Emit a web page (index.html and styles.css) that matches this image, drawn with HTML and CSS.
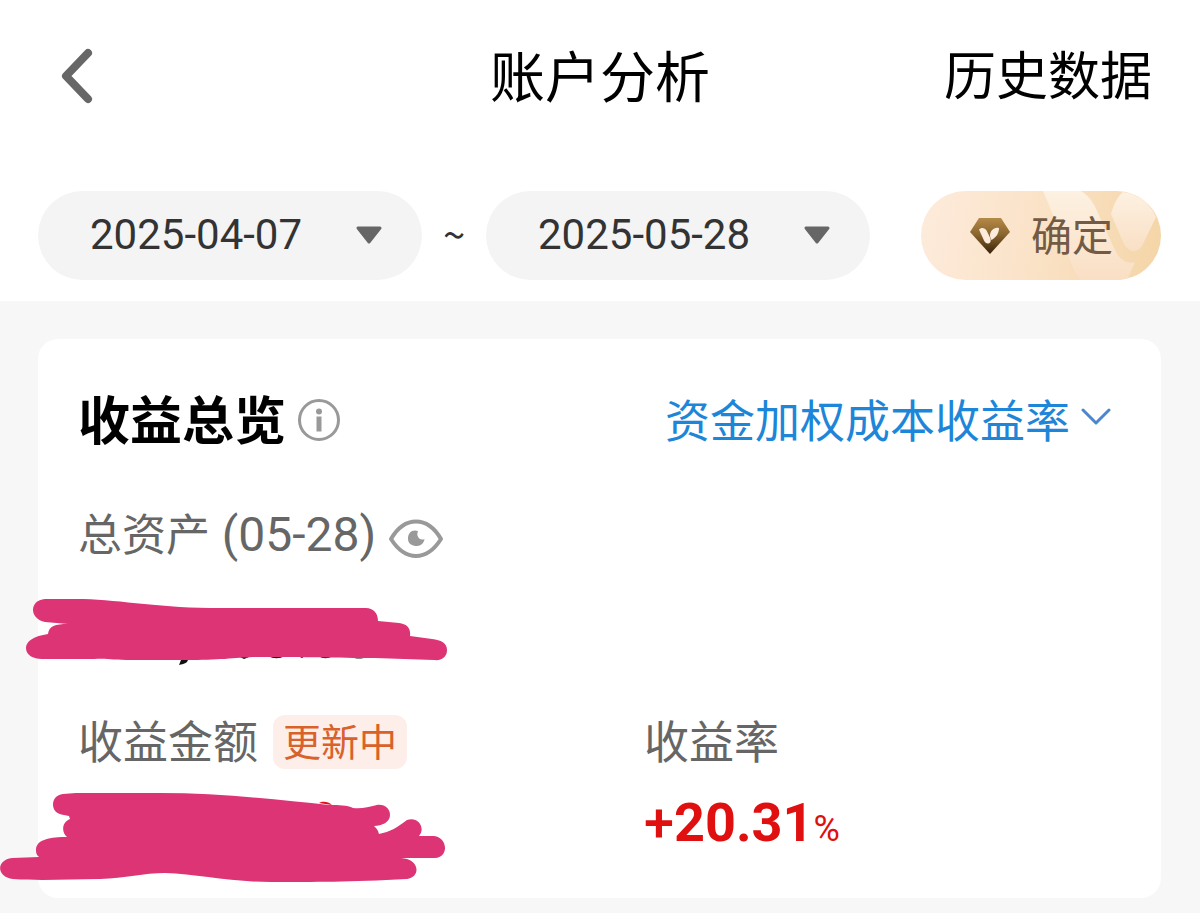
FILE: index.html
```html
<!DOCTYPE html>
<html lang="zh-CN">
<head>
<meta charset="utf-8">
<meta name="viewport" content="width=device-width, initial-scale=1">
<title>账户分析</title>
<link rel="stylesheet" href="styles.css">
</head>
<body>
<header class="topbar">
  <button class="back" type="button" aria-label="返回">
    <svg width="34" height="56" viewBox="0 0 34 56" aria-hidden="true"><path d="M28 5 6 28l22 23" fill="none" stroke="#676767" stroke-width="8" stroke-linecap="round" stroke-linejoin="round"/></svg>
  </button>
  <h1 class="page-title">账户分析</h1>
  <a class="history" href="#history">历史数据</a>
</header>

<form class="filters">
  <div class="date">
    <select class="date-select" aria-label="开始日期"><option>2025-04-07</option></select>
    <svg class="date-arrow" width="28" height="20" viewBox="0 0 28 20" aria-hidden="true"><path d="M3 2h22l-11 14z" fill="#666" stroke="#666" stroke-width="3" stroke-linejoin="round"/></svg>
  </div>
  <span class="tilde">~</span>
  <div class="date">
    <select class="date-select" aria-label="结束日期"><option>2025-05-28</option></select>
    <svg class="date-arrow" width="28" height="20" viewBox="0 0 28 20" aria-hidden="true"><path d="M3 2h22l-11 14z" fill="#666" stroke="#666" stroke-width="3" stroke-linejoin="round"/></svg>
  </div>
  <button class="confirm" type="button">
    <svg class="confirm-art" viewBox="0 0 240 89" preserveAspectRatio="none" aria-hidden="true">
      <defs>
        <linearGradient id="petal" x1="0" y1="0" x2="0" y2="1"><stop offset="0" stop-color="#fdf1e2"/><stop offset="1" stop-color="#f9dfc4"/></linearGradient>
      </defs>
      <path d="M122 0h38c10 6 15 16 19 27l15 32c5 11 13 14 20 12l-8 18h-47C146 70 140 40 122 0z" fill="url(#petal)"/>
      <path d="M202 1c-6 5-10 14-12 22l13 30c5 9 14 10 19 0l13-27C228 10 216 3 202 1z" fill="url(#petal)"/>
    </svg>
    <svg class="gem" width="42" height="38" viewBox="0 0 42 38" aria-hidden="true">
      <defs><linearGradient id="gem" x1="0" y1="0" x2="0" y2="1"><stop offset="0" stop-color="#b58a48"/><stop offset=".45" stop-color="#8b662f"/><stop offset="1" stop-color="#38210a"/></linearGradient></defs>
      <path d="M10 1h22l9 14-20 22L1 15z" fill="url(#gem)"/>
      <path d="M10 12.500c2-2.500 6-2 7.500 1l3.500 7c1.500 3 .5 5.500-1.500 6-2 .3-3.500-1-4.500-3z" fill="#fdecdb"/>
      <path d="M30 11c-5-1.500-9 3-9 7.500 0 1.500.8 3 1.500 4.500 4.500-2.500 7.500-6.500 7.500-12z" fill="#fdecdb"/>
    </svg>
    <span class="confirm-text">确定</span>
  </button>
</form>

<main class="content">
  <section class="card">
    <div class="card-head">
      <h2 class="card-title">收益总览</h2>
      <button class="icon-btn info" type="button" aria-label="说明">
        <svg width="44" height="44" viewBox="0 0 44 44" aria-hidden="true"><circle cx="22" cy="22" r="19.5" fill="none" stroke="#999" stroke-width="3"/><circle cx="22" cy="13.500" r="3" fill="#999"/><path d="M22 18.500v15" stroke="#999" stroke-width="5"/></svg>
      </button>
      <div class="method">
        <select class="method-select" aria-label="收益率算法"><option>资金加权成本收益率</option></select>
        <svg class="method-arrow" width="30" height="20" viewBox="0 0 30 20" aria-hidden="true"><path d="M2 3l13 13L28 3" fill="none" stroke="#4c86cf" stroke-width="3" stroke-linecap="round" stroke-linejoin="round"/></svg>
      </div>
    </div>

    <div class="asset-label">
      <span class="label-text">总资产 <span class="asset-date">(05-28)</span></span>
      <button class="icon-btn eye" type="button" aria-label="隐藏金额">
        <svg width="56" height="42" viewBox="0 0 56 42" aria-hidden="true"><path d="M3 21C10 9 19 3.500 28 3.500S46 9 53 21C46 32 37 38 28 38S10 32 3 21z" fill="none" stroke="#999" stroke-width="4" stroke-linejoin="round"/><path d="M30 13c-6-2-10 2-10 7.500S24 28 29 28c4 0 7-3 7.500-7-4 2-9-2-6.500-8z" fill="#999"/></svg>
      </button>
    </div>
    <div class="amount">
      <svg class="scribble scribble-asset" width="460" height="100" viewBox="0 0 460 100" aria-hidden="true">
        <path d="M181 80h7c-1 3-4 4-9 5zM240 77h9l-5 2zM269 76h15c-3 3-12 3-15 0zM298 76h7l-3 2zM319 76h13c-3 3-10 3-13 0zM352 77h14c-4 2-10 2-14 0z" fill="#111"/>
        <path d="M45 19C29 20 29 39 45 42l23 2c-13 0-19 2-20 10C34 56 26 61 26 68c0 7 7 11 16 11h52c14-1 18 1 38 1h60c32 0 50-3 68-3 46 0 75 1 115 1l59 2c9 1 13-4 13-10 0-7-6-10-15-11l-22-3c1-8-3-12-11-13l-21-2c0-8-5-13-12-13H210C150 27 110 18 70 19z" fill="#dc3475"/>
      </svg>
    </div>

    <div class="metrics">
      <div class="metric">
        <div class="metric-label"><span class="label-text">收益金额</span><span class="tag">更新中</span></div>
        <div class="amount">
          <svg class="scribble scribble-profit" width="460" height="120" viewBox="0 0 460 120" aria-hidden="true">
            <path d="M319 23c3-2 9-2 13 2z" fill="#e01218"/>
            <path d="M63 14c-13 1-14 20 1 21l5 1 1 3c-8 3-9 13-3 18-16 0-31 2-31 13 0 4 1 5 3 7L12 78c-16 2-16 19 1 21 30 2 57 0 87 0 25-1 44-6 65-6 32 1 65 9 106 9 44 0 78 0 136-3 14-2 13-20-6-21h34c14-1 13-20-1-22h-15c7-8-1-20-12-16-9 7-17 12-28 14-1-4-2-5-5-8 8 0 16-4 16-11 0-6-5-11-13-10-9 2-15 4-24 3-6-3-14-3-24-3C280 20 220 13 160 13H76z" fill="#dc3475"/>
          </svg>
        </div>
      </div>
      <div class="metric">
        <div class="metric-label"><span class="label-text">收益率</span></div>
        <div class="amount rate"><span class="sign">+</span>20.31<span class="percent">%</span></div>
      </div>
    </div>
  </section>
</main>
</body>
</html>
```

FILE: styles.css
```css
* {
  box-sizing: border-box;
}

body {
  margin: 0;
  background: #f7f7f7;
  color: #000;
  font-family: "Noto Sans CJK SC", sans-serif;
}

button,
select {
  margin: 0;
  padding: 0;
  border: 0;
  background: none;
  color: inherit;
  font: inherit;
  appearance: none;
}

svg {
  display: block;
  flex: none;
}

.topbar {
  display: grid;
  grid-template-columns: 1fr auto 1fr;
  align-items: center;
  height: 151px;
  padding: 0 48px;
  background: #fff;
}

.back {
  justify-self: start;
  margin-left: 12px;
}

.page-title {
  margin: 0;
  padding-bottom: 6px;
  font-size: 55px;
  font-weight: 400;
  line-height: 80px;
}

.history {
  justify-self: end;
  padding-bottom: 6px;
  color: #000;
  font-size: 52px;
  line-height: 80px;
  text-decoration: none;
}

.filters {
  display: grid;
  grid-template-columns: 384fr 64px 384fr 51px 240fr;
  padding: 40px 39px 21px 38px;
  background: #fff;
}

.date {
  display: grid;
  align-items: center;
  height: 89px;
  border-radius: 45px;
  background: #f4f4f4;
}

.date-select {
  grid-area: 1 / 1;
  width: 100%;
  height: 89px;
  padding: 0 0 2px 52px;
  color: #333;
  font-family: Roboto, sans-serif;
  font-size: 42px;
}

.date-arrow {
  grid-area: 1 / 1;
  justify-self: end;
  margin-right: 39px;
  pointer-events: none;
}

.tilde {
  color: #333;
  font-size: 40px;
  line-height: 84px;
  text-align: center;
}

.confirm {
  position: relative;
  display: flex;
  grid-column: 5;
  align-items: center;
  justify-content: center;
  gap: 20px;
  height: 89px;
  overflow: hidden;
  border-radius: 45px;
  background: linear-gradient(100deg, #fdebdc, #fae2c6 50%, #f4d5a6);
  color: #735a45;
  font-size: 41px;
}

.confirm-art {
  position: absolute;
  inset: 0;
  width: 100%;
  height: 100%;
}

.gem,
.confirm-text {
  position: relative;
}

.confirm-text {
  padding-bottom: 6px;
}

.content {
  padding: 38px 39px 15px 38px;
}

.card {
  padding: 42px 40px 35px;
  border-radius: 20px;
  background: #fff;
}

.card-head {
  display: flex;
  align-items: center;
  height: 78px;
}

.card-title {
  margin: 0;
  padding-bottom: 4px;
  font-size: 52px;
  font-weight: 700;
  line-height: 74px;
}

.info {
  margin-left: 11px;
}

.method {
  display: flex;
  align-items: center;
  gap: 10px;
  margin-left: auto;
  padding-right: 10px;
}

.method-select {
  height: 70px;
  padding-bottom: 4px;
  color: #1d86d8;
  font-size: 45px;
}

.method-arrow {
  margin-bottom: 6px;
}

.asset-label {
  display: flex;
  align-items: center;
  gap: 12px;
  height: 66px;
  margin-top: 43px;
  color: #666;
  font-size: 44px;
}

.label-text {
  padding-bottom: 4px;
  line-height: 62px;
}

.asset-date {
  margin-left: 2px;
  font-family: Roboto, sans-serif;
  font-size: 48px;
}

.eye {
  margin-top: 8px;
}

.amount {
  position: relative;
  height: 80px;
  margin-top: 8px;
  line-height: 80px;
}

.scribble {
  position: absolute;
  left: -78px;
}

.scribble-asset {
  top: 4px;
}

.scribble-profit {
  top: -3px;
}

.metrics {
  display: grid;
  grid-template-columns: 566fr 477fr;
  margin-top: 53px;
}

.metric-label {
  display: flex;
  align-items: center;
  gap: 15px;
  height: 66px;
  color: #666;
  font-size: 45px;
}

.tag {
  padding: 0 10px 4px;
  border-radius: 12px;
  background: #fdeeea;
  color: #d9622b;
  font-size: 38px;
  line-height: 50px;
}

.rate {
  color: #e01010;
  font-family: Roboto, sans-serif;
  font-size: 54px;
  font-weight: 700;
}

.sign {
  font-weight: 500;
}

.percent {
  font-size: 36px;
  font-weight: 400;
}
```
